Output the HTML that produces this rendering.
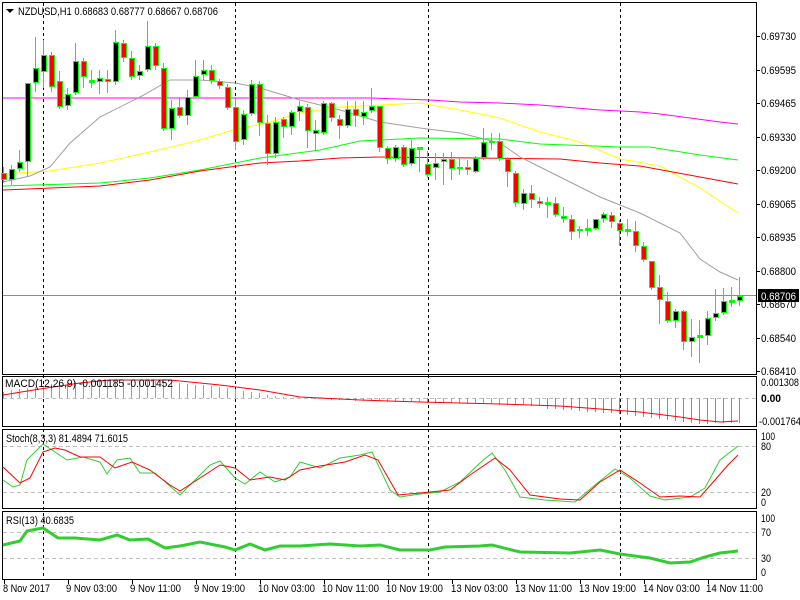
<!DOCTYPE html>
<html><head><meta charset="utf-8"><style>
body{margin:0;background:#fff;width:800px;height:600px;overflow:hidden}
svg{display:block;font-family:"Liberation Sans",sans-serif;font-size:11px}
</style></head><body>
<svg id="s" width="800" height="600" xmlns="http://www.w3.org/2000/svg">
<rect width="800" height="600" fill="#fff"/>
<g id="g"></g>
<g fill="#000" lengthAdjust="spacingAndGlyphs">
<text x="18" y="15" textLength="200" lengthAdjust="spacingAndGlyphs">NZDUSD,H1  0.68683 0.68777 0.68667 0.68706</text>
<path d="M6 9 L14 9 L10 13 Z"/>
<text x="5" y="387" textLength="168" lengthAdjust="spacingAndGlyphs">MACD(12,26,9) -0.001185 -0.001452</text>
<text x="6" y="442" textLength="122" lengthAdjust="spacingAndGlyphs">Stoch(8,3,3) 81.4894 71.6015</text>
<text x="6" y="524" textLength="68" lengthAdjust="spacingAndGlyphs">RSI(13) 40.6835</text>
<g id="pl"></g>
</g>
<rect x="758" y="289" width="41" height="13" fill="#000"/>
<text x="761" y="300" fill="#fff" textLength="35" lengthAdjust="spacingAndGlyphs">0.68706</text>
</svg>
<script>
var g=document.getElementById('g'),h='',t='';
function T(x,y,s,w,b){t+='<text x="'+x+'" y="'+y+'" textLength="'+w+'" lengthAdjust="spacingAndGlyphs"'+(b?' font-weight="bold"':'')+'>'+s+'</text>';}
[["0.69730",40],["0.69595",74],["0.69465",107],["0.69330",141],["0.69200",174],["0.69065",208],["0.68935",241],["0.68800",275],["0.68670",308],["0.68540",342],["0.68410",375]].forEach(function(a){T(761,a[1],a[0],35);});
T(761,386,"0.001308",38);T(761,402,"0.00",20,1);T(759,425,"-0.001764",42);
T(761,440,"100",14);T(761,450,"80",10);T(761,496,"20",10);T(761,506,"0",5);
T(761,522,"100",14);T(761,536,"70",10);T(761,562,"30",10);T(761,576,"0",5);
[["8 Nov 2017",3,47],["9 Nov 03:00",66,51],["9 Nov 11:00",130,51],["9 Nov 19:00",194,51],["10 Nov 03:00",258,57],["10 Nov 11:00",322,57],["10 Nov 19:00",386,57],["13 Nov 03:00",451,57],["13 Nov 11:00",515,57],["13 Nov 19:00",579,57],["14 Nov 03:00",643,57],["14 Nov 11:00",706,57]].forEach(function(a){T(a[1],592,a[0],a[2]);});
document.getElementById('pl').innerHTML=t;
function L(p,c,w,extra){h+='<polyline fill="none" stroke="'+c+'" stroke-width="'+(w||1)+'" '+(extra||'')+' points="'+p+'"/>';}
[[2,2,754,372],[2,376,754,50],[2,429,754,79],[2,511,754,68]].forEach(function(r){h+='<rect x="'+(r[0]+.5)+'" y="'+(r[1]+.5)+'" width="'+r[2]+'" height="'+r[3]+'" fill="none" stroke="#000"/>';});
[[398],[446],[492],[532],[558]].forEach(function(y){h+='<line x1="3" x2="756" y1="'+(y[0]+.5)+'" y2="'+(y[0]+.5)+'" stroke="#c0c0c0" stroke-dasharray="4,3"/>';});
[43,235,428,620].forEach(function(x){h+='<line x1="'+(x+.5)+'" x2="'+(x+.5)+'" y1="3" y2="580" stroke="#000" stroke-dasharray="3,3"/>';});
for(var i=0;i<12;i++){var x=4+64*i;h+='<line x1="'+x+'.5" x2="'+x+'.5" y1="580" y2="584" stroke="#000"/>';}
[36,70,103,137,170,204,237,271,304,338,371].forEach(function(y){h+='<line x1="756" x2="760" y1="'+y+'.5" y2="'+y+'.5" stroke="#000"/>';});
h+='<line x1="3" x2="756" y1="295.5" y2="295.5" stroke="#8c8c8c"/>';
L("3,98 260,98 370,98 430,100 460,102 500,103 540,105 600,110 640,112 660,114 690,118 720,122 738,124","#ff00ff");
L("3,174 50,171 100,163 150,152 200,140 233,130 270,122 300,113 340,107 380,105 420,103 460,110 500,118 540,132 580,142 620,159 660,166 700,188 738,213","#ffff00");
L("3,186 100,183 150,178 200,170 260,158 320,150 360,141 420,138 500,139 540,144 620,147 650,147 700,155 738,160","#00ff00");
L("3,190 100,186 150,180 200,171 260,163 300,161 340,158 380,157 560,159 600,163 640,166 700,177 738,184","#ff0000");
L("3,182 30,176 50,167 70,143 100,117 140,97 170,80 200,80 235,83 260,88 300,100 340,110 380,122 420,128 460,133 500,143 520,157 540,167 600,197 640,213 680,233 700,259 720,272 738,280","#a0a0a0");
var C=[[173,180,167,183,0],[169,180,165,185,1],[162,169,150,172,1],[83,162,83,177,1],[68,83,37,92,1],[55,72,40,88,1],[55,87,52,92,0],[81,107,71,109,0],[94,106,88,110,1],[61,93,43,95,1],[61,77,58,88,0],[81,82,70,88,1],[78,82,70,94,1],[79,82,70,93,0],[42,82,30,85,1],[43,58,40,62,0],[58,77,51,80,0],[71,76,65,80,1],[46,70,21,72,1],[46,66,43,70,0],[68,129,63,131,0],[108,129,100,140,1],[107,116,97,118,0],[97,116,90,125,1],[76,97,60,98,1],[70,75,60,80,1],[70,81,65,84,0],[81,86,79,89,0],[87,108,84,110,0],[107,142,97,150,0],[114,140,110,145,1],[84,114,80,116,1],[84,123,81,136,0],[123,154,115,165,0],[122,154,117,158,1],[119,127,117,138,0],[112,127,110,135,1],[106,112,101,121,1],[107,131,104,148,0],[130,134,120,150,1],[103,133,101,135,1],[103,118,102,122,0],[119,126,115,139,0],[109,126,101,128,1],[109,116,101,127,0],[112,117,101,125,1],[106,111,88,113,1],[106,148,106,152,0],[148,159,146,164,0],[147,159,145,162,1],[147,165,145,167,0],[148,164,140,166,1],[148,149,148,172,1],[164,175,151,178,0],[163,168,153,180,1],[159,162,153,185,1],[159,169,152,180,0],[167,169,157,175,1],[167,170,160,175,0],[158,172,156,173,1],[142,158,128,160,1],[141,143,133,150,1],[141,159,133,161,0],[159,172,157,187,0],[173,203,171,207,0],[193,204,189,210,1],[193,200,185,208,0],[201,204,197,208,0],[203,204,197,218,1],[203,215,197,217,0],[216,219,207,223,0],[219,232,215,240,0],[229,231,226,238,1],[229,230,219,236,1],[219,229,219,230,1],[214,219,212,223,1],[215,222,212,228,0],[223,231,220,246,0],[230,231,219,236,1],[231,246,221,252,0],[246,260,242,262,0],[261,288,261,290,0],[287,300,275,324,0],[301,321,292,323,0],[311,321,309,328,1],[311,342,310,350,0],[337,342,319,357,1],[336,337,320,363,1],[318,336,311,345,1],[313,318,289,321,1],[301,313,288,315,1],[301,302,287,307,1],[296,301,277,306,1]];
C.forEach(function(c,i){var x=3+8*i;
h+='<line x1="'+(x+.5)+'" x2="'+(x+.5)+'" y1="'+c[2]+'" y2="'+c[3]+'" stroke="#00ff00"/>';
var bh=c[1]-c[0];
if(bh<2){h+='<rect x="'+(x-2)+'" y="'+(c[0]-1)+'" width="6" height="3" fill="#00ff00"/>';}
else h+='<rect x="'+(x-2)+'.5" y="'+c[0]+'.5" width="5" height="'+(bh-1)+'" fill="'+(c[4]?'#000':'#ff0000')+'" stroke="#00ff00"/>';});
var sig=[[3,395],[40,389],[80,383],[110,380],[170,380],[220,385],[260,390],[300,397],[360,400],[420,402],[500,404],[560,406],[600,409],[640,412],[680,417],[700,420],[720,422],[738,421]];
function interp(a,x){for(var k=0;k<a.length-1;k++){if(x>=a[k][0]&&x<=a[k+1][0]){var t=(x-a[k][0])/(a[k+1][0]-a[k][0]);return a[k][1]+t*(a[k+1][1]-a[k][1]);}}return a[a.length-1][1];}
for(var i=0;i<93;i++){var x=3+8*i;var v=interp(sig,x+20);var col=x>540?'#32cd32':'#a0a0a0';if(x>540)v+=2;h+='<line x1="'+(x+.5)+'" x2="'+(x+.5)+'" y1="398" y2="'+Math.round(v)+'" stroke="'+col+'"/>';}
L(sig.map(function(p){return p.join(',')}).join(' '),"#ff0000");
L("3,480 13,487 20,485 27,460 43,444 67,460 83,457 100,462 107,474 117,460 130,458 140,473 155,473 180,495 195,480 210,465 220,461 235,478 245,484 260,472 275,482 290,477 300,462 320,468 340,458 360,455 372,452 390,490 400,497 420,494 440,492 460,482 480,463 492,453 505,470 520,497 545,500 575,502 595,485 615,469 630,478 650,496 665,500 690,497 705,488 720,460 738,446","#32cd32");
L("3,467 20,483 30,478 43,452 55,448 65,450 80,457 100,457 115,468 132,462 150,470 170,485 180,491 200,478 220,465 235,468 250,480 270,477 285,480 300,470 320,466 345,462 365,455 378,460 398,495 420,493 450,490 470,475 495,458 510,470 530,495 560,499 580,500 600,482 620,470 640,483 660,497 680,496 700,497 715,480 728,465 738,455","#ff0000");
L("3,545 20,541 27,531 43,528 58,538 75,538 100,540 117,535 130,540 148,539 165,548 180,546 200,542 225,547 235,550 250,544 265,550 280,546 300,546 330,544 360,546 380,545 400,550 430,550 445,547 480,546 492,545 520,552 570,553 600,550 620,554 650,558 670,563 690,562 705,557 720,553 738,551","#32cd32",3);
g.innerHTML=h;
</script>
</body></html>
